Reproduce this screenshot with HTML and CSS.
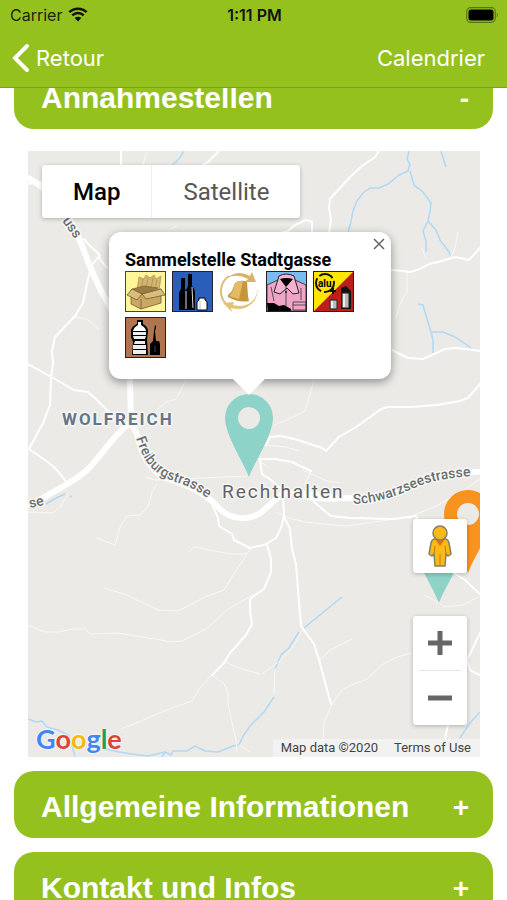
FILE: index.html
```html
<!DOCTYPE html>
<html lang="de">
<head>
    <meta charset="UTF-8">
    <meta name="viewport" content="width=device-width, initial-scale=1.0">
    <title>Annahmestellen</title>
    <link rel="stylesheet" href="styles.css">
</head>
<body>
    <div class="app">
        <header class="header">
            <div class="status-bar">
                <div class="status-left">
                    <span>Carrier</span>
                    <svg class="wifi" viewBox="0 0 20 15" width="20" height="15" aria-hidden="true">
                        <path d="M1.300 5.200A12.500 12.500 0 0 1 18.700 5.200" fill="none" stroke="#111" stroke-width="2.500"/>
                        <path d="M4.300 8.400A8.200 8.200 0 0 1 15.700 8.400" fill="none" stroke="#111" stroke-width="2.500"/>
                        <path d="M6.700 11A4.700 4.700 0 0 1 13.300 11L10 14.500Z" fill="#111"/>
                    </svg>
                </div>
                <strong class="status-time">1:11 PM</strong>
                <div class="status-right">
                    <svg viewBox="0 0 33 16" width="33" height="16" aria-hidden="true">
                        <rect x="0.700" y="0.700" width="28.600" height="14.600" rx="4" fill="none" stroke="#587313" stroke-width="1.200"/>
                        <rect x="2.500" y="2.500" width="25" height="11" rx="2.500" fill="#000"/>
                        <path d="M30.800 5.500Q33 8 30.800 10.500Z" fill="#587313"/>
                    </svg>
                </div>
            </div>
            <nav class="nav-bar">
                <a href="#" class="nav-link">
                    <svg viewBox="0 0 18 30" width="18" height="30" aria-hidden="true">
                        <path d="M15 3L3 15L15 27" fill="none" stroke="#fff" stroke-width="4" stroke-linecap="round" stroke-linejoin="miter"/>
                    </svg>
                    Retour
                </a>
                <a href="#" class="nav-link">Calendrier</a>
            </nav>
        </header>

        <main class="content">
            <button type="button" class="accordion" aria-expanded="true">
                <span>Annahmestellen</span>
                <span class="accordion-sign">-</span>
            </button>

            <section class="map" aria-label="Karte">
                <svg class="map-canvas" viewBox="28 151 452 606" preserveAspectRatio="xMidYMid slice">
                    <defs>
                        <path id="freiburg" d="M136 438C142 455 146 466 162 476C178 485 194 484 216 506"/>
                        <path id="schwarzsee" d="M353 504C385 503 404 492 424 484C438 480 452 477 475 476"/>
                        <path id="pin" fill-rule="evenodd" d="M0 0C-5 -14 -24 -42 -24 -59A24 24 0 0 1 24 -59C24 -42 5 -14 0 0ZM0 -70A11 11 0 1 0 0 -48A11 11 0 1 0 0 -70Z"/>
                    </defs>

                    <!-- water -->
                    <g class="water">
                        <path d="M184 151L179 159L171 166M409 151L407 159L410 164L408 171L399 175L388 184L379 188L370 188L363 193L357 201L353 211L351 221L348 233M410 171L414 185L423 192L431 203L430 212L428 221L436 230L440 240L449 252L451 256M428 221L423 231L426 241L426 252M441 151L446 167"/>
                        <path d="M418 304L423 305L427 319L431 332L433 340L433 353M431 332L443 332L455 337L464 343L471 348"/>
                        <path d="M46 504L56 498L65 494M70 497L72 496M304 628L342 597M299 632L289 648L281 655L275 669M274 697L264 712L250 726L243 736L239 745L233 746L218 752L205 751L195 746L187 751L173 751L171 755L165 752L162 757M165 752L148 756L132 754L119 752L105 749M28 719L36 722L42 721L47 727L58 730L68 735L72 745L75 757M480 712L470 723L460 738"/>
                    </g>

                    <!-- paths and minor roads -->
                    <g class="road road-thin">
                        <path d="M146 153L143 165M458 232L455 248L450 258M426 259L422 248M407 273L407 292L399 306L396 318M314 380L305 411L287 420L274 425M186 380L176 399L166 402L157 410M265 445L286 447L299 451M145 477L155 480L250 476M260 462L267 466M311 471L305 484M302 470L327 481L340 483M157 484L152 492L148 507L140 515L127 516L120 527L115 545L97 538M189 552L194 547L215 551L230 554L246 554M250 549L232 577L224 590L205 597L178 611L158 610L143 603L127 595L104 588M276 512L289 518L305 522L345 526L381 521L416 516M480 479L458 494L436 506L414 515M28 625L44 632L58 632L72 629L86 629L90 634L118 633L149 638L172 642L182 641L206 629L228 609L258 592M121 729L134 724L164 711L192 701L200 688L212 675M225 662L242 669L260 674M212 675L224 684L228 691L228 704L236 741L237 752M250 752L239 745M275 669L274 694M303 629L292 648L280 661L262 674M320 660L330 650L352 639M323 741L324 722L332 704L342 690L351 685L367 679L383 664L397 657L412 653M424 595L432 599L445 607L463 605L478 597M28 512L53 513L60 507L68 494M75 317L87 319L98 329M170 229L177 226"/>
                    </g>
                    <g class="road road-minor">
                        <path d="M121 151L121 167M219 151L208 162L198 168M379 151L375 157L362 166L350 177L330 199L329 208L331 219L329 234M28 184L42 182M276 234L288 231L295 225L306 220L312 222L312 236M107 268L100 259L98 253L89 245L84 239M100 255L92 265L88 279L83 303L75 316L55 337L52 351L53 363L51 378L50 405L43 423L29 449M28 364L53 378L74 390L88 392L97 400L110 413M29 449L45 460L54 467L61 475L68 484M375 271L393 270L410 272L420 269L429 264L438 262L455 257L469 260L480 248M392 350L408 358L423 359L445 349L455 348L466 349L480 351M480 384L468 398L460 401L437 405L411 407L388 407L381 409L366 420L356 427L339 437L326 451L322 448L298 440L281 436L270 437L266 445M260 459L275 459L292 462L311 471M260 459L262 474L271 480L283 491M314 502L331 516L350 518L393 519L416 516L454 573L465 580L480 594M212 504L218 518L219 526L232 534L234 540L250 548L264 545L276 538L281 528L284 517L290 529L292 549L296 564L298 590L301 626L314 644L319 660L331 704M267 545L271 559L271 572L264 589L250 599L250 611L252 624L246 635L230 653L224 663L212 675M284 518L283 494M480 633L472 650L467 660L470 670L480 675M448 725L445 738"/>
                    </g>
                    <g class="road road-mid">
                        <path d="M130 380L130 425M28 505L42 499M283 491L296 494L314 499L335 500"/>
                    </g>

                    <!-- main roads -->
                    <g class="road road-main">
                        <path d="M28 178C56 193 73 221 83 248C93 277 105 302 123 326C130 337 129 355 130 380L131 422L137 434C142 457 151 472 168 479C187 484 204 492 218 507C231 522 253 521 265 509L283 493L308 494L340 498C386 500 412 486 437 477C450 472 462 472 480 472"/>
                        <path d="M130 423C111 437 101 457 87 470C72 484 50 492 34 504"/>
                    </g>

                    <g class="map-labels">
                        <text class="label-road" transform="translate(62 221) rotate(54)">uss</text>
                        <text class="label-road" transform="translate(30 508) rotate(-12)">se</text>
                        <text class="label-road"><textPath href="#freiburg">Freiburgstrasse</textPath></text>
                        <text class="label-road"><textPath href="#schwarzsee">Schwarzseestrasse</textPath></text>
                        <text class="label-district" x="62" y="425">WOLFREICH</text>
                        <text class="label-town" x="222" y="498">Rechthalten</text>
                    </g>

                    <use href="#pin" x="249" y="477" fill="#8dd3c7"/>
                    <use href="#pin" x="439" y="603" fill="#8dd3c7"/>
                    <use href="#pin" x="468" y="573" fill="#f7931e"/>
                </svg>

                <div class="map-type">
                    <button type="button" class="map-type-btn active">Map</button>
                    <button type="button" class="map-type-btn">Satellite</button>
                </div>

                <div class="info-window">
                    <button type="button" class="info-close" aria-label="Close">
                        <svg viewBox="0 0 12 12" width="12" height="12"><path d="M1 1L11 11M11 1L1 11" stroke="#666" stroke-width="1.500"/></svg>
                    </button>
                    <h2>Sammelstelle Stadtgasse</h2>
                    <div class="info-icons">
                        <!-- cardboard -->
                        <svg viewBox="0 0 41 41">
                            <rect x="0.500" y="0.500" width="40" height="40" fill="#fff699" stroke="#444"/>
                            <path d="M12 19L14 6L19 8L21 4L25 7L29 4L31 8L36 5L34 20Z" fill="#d2b56f" stroke="#a98b4d" stroke-width="0.700"/>
                            <path d="M18 8L16 18M23 7L21 18M28 7L26 18M32 9L30 18" stroke="#a98b4d" stroke-width="0.700"/>
                            <path d="M6 19L17 23L36 18L36 32L16 38L6 33Z" fill="#c8a863" stroke="#735b2d" stroke-width="0.800"/>
                            <path d="M7 18L19 15L33 17L17 23Z" fill="#9b7c42" stroke="#735b2d" stroke-width="0.600"/>
                            <path d="M7 18L2 24L12 29L17 23ZM17 23L36 18L40 24L21 28Z" fill="#dabd7a" stroke="#735b2d" stroke-width="0.800"/>
                            <path d="M16 28V38" stroke="#735b2d" stroke-width="0.800"/>
                        </svg>
                        <!-- glass -->
                        <svg viewBox="0 0 41 41">
                            <rect x="0.500" y="0.500" width="40" height="40" fill="#2a5ebb" stroke="#223"/>
                            <path d="M9 7H13V18Q15 20 15 23V39H7V23Q7 20 9 18Z" fill="#000"/>
                            <path d="M16 3H20V15Q23 18 23 21V39H14V21Q14 18 16 15Z" fill="#000"/>
                            <path d="M14 20V38M20 16L21 37" stroke="#ddd" stroke-width="1"/>
                            <path d="M27 27H33V29L35 31V39H25V31L27 29Z" fill="#fff" stroke="#000" stroke-width="1"/>
                            <path d="M28 30V38" stroke="#bbb" stroke-width="1"/>
                        </svg>
                        <!-- bell with arrows -->
                        <svg viewBox="0 0 41 41">
                            <path d="M7 33A18 18 0 0 1 3 14A18 18 0 0 1 10 5" fill="none" stroke="#e0bc70" stroke-width="2"/>
                            <path d="M8 7Q19 -2 31 5L33 1L37 11L26 11L29 8Q18 2 8 7Z" fill="#d9b366"/>
                            <path d="M37 13A18 18 0 0 1 36 29Q27 41 12 37L13 41L4 32L15 31L14 34Q28 38 36 27Q40 20 37 13Z" fill="#e3c378"/>
                            <path d="M16 12Q22 8 28 11L29 25L30 30Q20 32 9 26L9 24L13 20Z" fill="#c6963b"/>
                            <path d="M16 12Q20 9 24 10L20 28L10 25L14 20Z" fill="#e1bb65"/>
                        </svg>
                        <!-- clothes and shoes -->
                        <svg viewBox="0 0 41 41">
                            <rect x="0.500" y="0.500" width="40" height="40" fill="#7bbcf0" stroke="#222"/>
                            <path d="M1 14L12 9H29L40 14V40H1Z" fill="#f0a5c8" stroke="#222" stroke-width="0.800"/>
                            <path d="M13 5Q20 1 28 5L33 22L27 23L21 17L14 23L8 21Z" fill="#f4b2d0" stroke="#222" stroke-width="1"/>
                            <path d="M14 8Q20 6 27 8L20 16Z" fill="#000"/>
                            <path d="M20 16V39M5 16L8 30M35 17V29M27 31H40V39H27ZM27 34H40" fill="none" stroke="#333" stroke-width="0.800"/>
                            <circle cx="20" cy="21" r="1" fill="#222"/>
                            <path d="M1 32L8 32L13 35L18 34L25 38V40H2Z" fill="#000"/>
                        </svg>
                        <!-- aluminium and tins -->
                        <svg viewBox="0 0 41 41">
                            <rect x="0.500" y="0.500" width="40" height="40" fill="#bd1e1c"/>
                            <path d="M0 0H41L0 41Z" fill="#ffe600"/>
                            <rect x="0.500" y="0.500" width="40" height="40" fill="none" stroke="#222"/>
                            <circle cx="12" cy="12" r="9" fill="none" stroke="#111" stroke-width="2" stroke-dasharray="15 3"/>
                            <text x="5" y="16" class="alu">alu</text>
                            <path d="M20 17V23M17 20H23" stroke="#111" stroke-width="2"/>
                            <path d="M28 17L33 15L38 20V38H28Z" fill="#111"/>
                            <path d="M29 22H36V37H29ZM17 29H24V38H17Z" fill="#bbb" stroke="#222" stroke-width="1"/>
                            <path d="M31 23V36M19 30V37" stroke="#eee" stroke-width="2"/>
                        </svg>
                        <!-- plastic bottles and oil -->
                        <svg viewBox="0 0 41 41">
                            <rect x="0.500" y="0.500" width="40" height="40" fill="#ae7550" stroke="#222"/>
                            <path d="M12 3H18V7Q23 10 23 14L22 23L23 38H7L8 25L6 20V13Q7 9 12 7Z" fill="#000"/>
                            <path d="M13 5H16V8Q21 11 21 14H8Q9 10 13 8Z" fill="#fff"/>
                            <path d="M8 15H21V18H8ZM8 19H21L20 22H9ZM10 24H20V27H9ZM8 28H21V32H8ZM8 33H21V37H8Z" fill="#eee"/>
                            <path d="M30 8Q32 9 30 14L31 24H34L35 27V38H25V27L28 24L29 14Z" fill="#000"/>
                            <path d="M30 29V35" stroke="#444" stroke-width="1"/>
                        </svg>
                    </div>
                </div>

                <button type="button" class="pegman" aria-label="Street View">
                    <svg viewBox="0 0 24 42" width="24" height="42">
                        <path d="M7 14H17Q20 14 21 18L23 29L20 31L18 29L17 41H7L6 29L4 31L1 29L3 18Q4 14 7 14Z" fill="#fbb917" stroke="#858063" stroke-width="1.500"/>
                        <path d="M12 29V40M6 29L7 21M18 29L17 21" stroke="#b58216" stroke-width="1"/>
                        <path d="M7 14H17L12 21Z" fill="#e56d19"/>
                        <circle cx="12" cy="8" r="7" fill="#fbb917" stroke="#858063" stroke-width="1.500"/>
                    </svg>
                </button>

                <div class="zoom">
                    <button type="button" class="zoom-btn" aria-label="Zoom in">
                        <svg viewBox="0 0 26 26" width="26" height="26"><path d="M13 1V25M1 13H25" stroke="#666" stroke-width="5"/></svg>
                    </button>
                    <button type="button" class="zoom-btn" aria-label="Zoom out">
                        <svg viewBox="0 0 26 26" width="26" height="26"><path d="M1 13H25" stroke="#666" stroke-width="5"/></svg>
                    </button>
                </div>

                <a href="#" class="google" aria-label="Google"><span class="blue">G</span><span class="red">o</span><span class="yellow">o</span><span class="blue">g</span><span class="green">l</span><span class="red">e</span></a>

                <div class="attribution">
                    <span>Map data ©2020</span>
                    <a href="#">Terms of Use</a>
                </div>
            </section>

            <button type="button" class="accordion" aria-expanded="false">
                <span>Allgemeine Informationen</span>
                <span class="accordion-sign">+</span>
            </button>
            <button type="button" class="accordion" aria-expanded="false">
                <span>Kontakt und Infos</span>
                <span class="accordion-sign">+</span>
            </button>
        </main>
    </div>
</body>
</html>
```
FILE: styles.css
```css
* {
    margin: 0;
    padding: 0;
    box-sizing: border-box;
}

body {
    font-family: Inter, "Liberation Sans", sans-serif;
    background: #fff;
}

button {
    border: none;
    background: none;
    font: inherit;
    cursor: pointer;
}

a {
    color: inherit;
    text-decoration: none;
}

.app {
    display: flex;
    flex-direction: column;
    height: 100vh;
    overflow: hidden;
}

/* header */
.header {
    position: relative;
    z-index: 2;
    flex: none;
    background: #95c11f;
    border-bottom: 1px solid #7ca11b;
}

.status-bar {
    display: grid;
    grid-template-columns: 1fr auto 1fr;
    align-items: center;
    height: 29px;
    padding: 0 8px 0 10px;
    font-size: 16px;
    color: #1c2408;
}

.status-left {
    display: flex;
    align-items: center;
    gap: 6px;
}

.status-time {
    font-weight: 600;
    color: #111;
}

.status-right {
    display: flex;
    justify-content: flex-end;
}

.nav-bar {
    display: flex;
    justify-content: space-between;
    align-items: center;
    height: 58px;
    padding: 0 22px 0 12px;
    color: #fff;
    font-size: 22px;
}

.nav-link {
    display: flex;
    align-items: center;
    gap: 6px;
}

/* accordion */
.content {
    flex: 1;
    display: flex;
    flex-direction: column;
    gap: 14px;
    margin-top: -26px;
    padding: 0 14px;
    overflow: hidden;
}

.accordion {
    flex: none;
    display: flex;
    justify-content: space-between;
    align-items: center;
    height: 67px;
    padding: 4px 24px 0 27px;
    border-radius: 20px;
    background: #95c11f;
    color: #fff;
    font-family: "Liberation Sans", sans-serif;
    font-size: 30px;
    font-weight: bold;
    text-align: left;
}

.accordion-sign {
    padding-top: 3px;
    font-size: 28px;
}

/* map */
.map {
    position: relative;
    flex: none;
    height: 606px;
    margin: 8px 13px 0 14px;
    overflow: hidden;
    background: #ebeae7;
    font-family: Roboto, sans-serif;
}

.map-canvas {
    display: block;
    width: 100%;
    height: 100%;
}

.water {
    fill: none;
    stroke: #b0d9f6;
    stroke-width: 1.5px;
}

.road {
    fill: none;
    stroke: #fff;
    stroke-linecap: round;
    stroke-linejoin: round;
}

.road-thin {
    stroke: #f8f8f6;
    stroke-width: 1px;
}

.road-minor {
    stroke-width: 2px;
}

.road-mid {
    stroke-width: 4px;
}

.road-main {
    stroke-width: 6px;
}

.map-labels {
    paint-order: stroke;
    stroke: #f7f7f5;
    stroke-width: 3px;
    stroke-linejoin: round;
}

.label-road {
    font-size: 14px;
    fill: #686d70;
    font-weight: 500;
}

.label-district {
    font-size: 17px;
    font-weight: bold;
    letter-spacing: 2px;
    fill: #667587;
}

.label-town {
    font-size: 19px;
    letter-spacing: 2px;
    fill: #5d6266;
}

.map-type {
    position: absolute;
    top: 14px;
    left: 14px;
    display: flex;
    border-radius: 3px;
    background: #fff;
    box-shadow: 0 1px 4px rgba(0,0,0,0.25);
}

.map-type-btn {
    height: 53px;
    padding: 0 31px;
    font-size: 24px;
    color: #565656;
}

.map-type-btn.active {
    border-right: 1px solid #eee;
    color: #000;
    font-weight: 500;
}

.info-window {
    position: absolute;
    top: 81px;
    left: 81px;
    width: 282px;
    height: 147px;
    padding: 16px;
    border-radius: 12px;
    background: #fff;
    box-shadow: 0 3px 10px rgba(0,0,0,0.4);
}

.info-window::after {
    content: "";
    position: absolute;
    top: 100%;
    left: 124px;
    border: 16px solid transparent;
    border-top-color: #fff;
    border-bottom: none;
}

.info-window h2 {
    font-size: 18px;
    line-height: 23px;
}

.info-icons {
    display: flex;
    flex-wrap: wrap;
    gap: 5px 6px;
}

.info-icons svg {
    width: 41px;
    height: 41px;
}

.alu {
    font-size: 10px;
    font-weight: bold;
}

.info-close {
    position: absolute;
    top: 2px;
    right: 2px;
    width: 20px;
    height: 20px;
    line-height: 0;
}

.pegman,
.zoom {
    position: absolute;
    right: 13px;
    width: 54px;
    border-radius: 3px;
    background: #fff;
    box-shadow: 0 1px 4px rgba(0,0,0,0.25);
}

.pegman {
    bottom: 184px;
    height: 54px;
    line-height: 0;
}

.zoom {
    bottom: 32px;
    padding: 0 6px;
}

.zoom-btn {
    display: block;
    width: 100%;
    height: 54px;
    line-height: 0;
}

.zoom-btn + .zoom-btn {
    height: 55px;
    border-top: 1px solid #e6e6e6;
}

.google {
    position: absolute;
    bottom: 1px;
    left: 8px;
    font-family: Lato, sans-serif;
    font-size: 27px;
    font-weight: bold;
    line-height: 34px;
    text-shadow: 0 0 2px #fff, 0 0 2px #fff;
}

.blue {
    color: #4285f4;
}

.red {
    color: #dc4437;
}

.yellow {
    color: #f4b912;
}

.green {
    color: #1fa05a;
}

.attribution {
    position: absolute;
    right: 0;
    bottom: 0;
    display: flex;
    gap: 16px;
    padding: 0 9px 0 8px;
    background: rgba(245,245,245,0.7);
    font-size: 13px;
    line-height: 18px;
    color: #444;
}
```
